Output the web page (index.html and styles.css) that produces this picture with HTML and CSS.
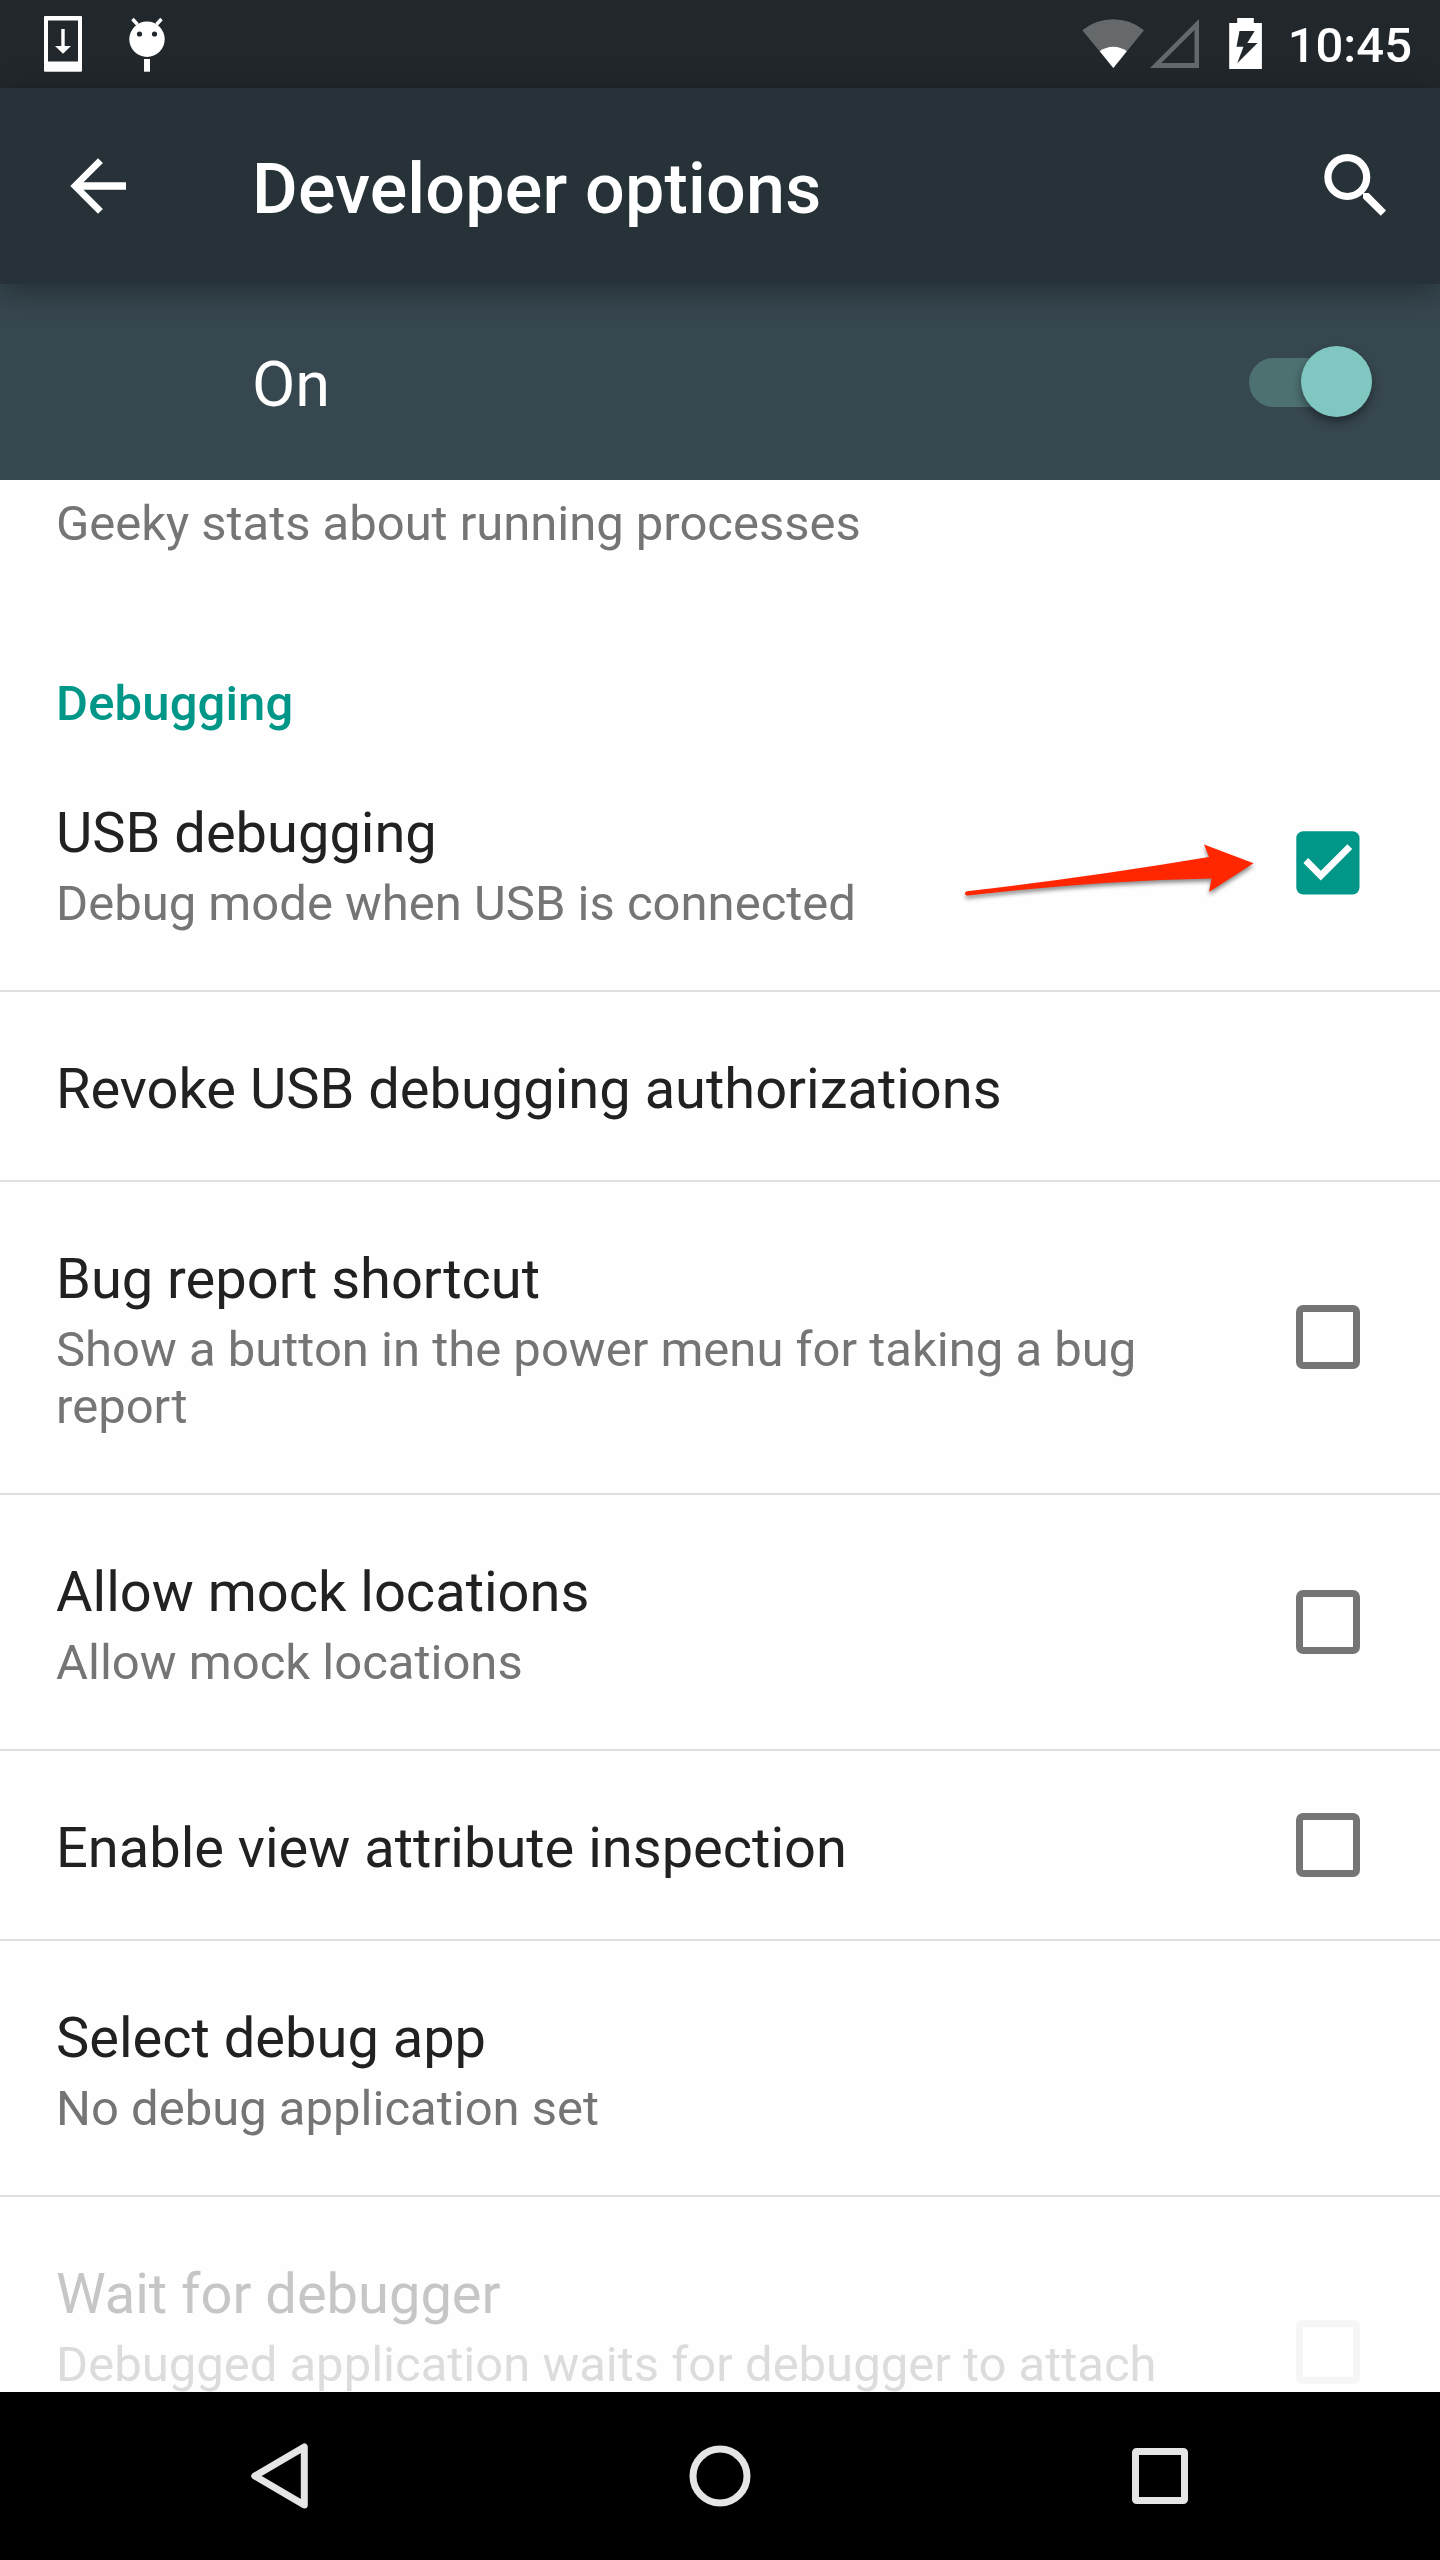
FILE: index.html
```html
<!DOCTYPE html>
<html lang="en">
<head>
<meta charset="utf-8">
<title>Developer options</title>
<link rel="stylesheet" href="styles.css">
</head>
<body>
<div class="screen">
  <div class="status-bar">
    <svg class="status-left" width="200" height="88" viewBox="0 0 200 88" fill="#fff">
      <path fill-rule="evenodd" d="M45 16h36q1 0 1 1v53.700q0 1-1 1H45q-1 0-1-1V17q0-1 1-1zM48 20.500v41h30v-41z"/>
      <path d="M61.300 29h3.400v17h6.300L63 53.700 55 46h6.300z"/>
      <circle cx="147" cy="39.200" r="17.700"/>
      <path d="M132.500 19l5 5.500M161.500 19l-5 5.500" stroke="#fff" stroke-width="3.400"/>
      <path d="M144 59h6v12.700h-6z"/>
      <circle cx="139.500" cy="34" r="2.600" fill="#21272b"/>
      <circle cx="154.500" cy="34" r="2.600" fill="#21272b"/>
    </svg>
    <svg class="status-right" width="200" height="88" viewBox="1070 0 200 88" fill="#fff">
      <path fill="#65696c" d="M1113.300 68L1082.300 30.200A49 49 0 0 1 1144 30.200z"/>
      <path d="M1113.300 68L1099.800 51.300A22 22 0 0 1 1126.800 51.300z"/>
      <path fill="#65696c" fill-rule="evenodd" d="M1150 68h49V19zM1161.300 63h33.200V30z"/>
      <path fill-rule="evenodd" d="M1229.200 23h8v-5h16.600v5h8.100v46h-32.700zM1239.500 31l-3 15.700h7l-6.300 16.600 20.300-20.300h-10.200l7.300-12z"/>
    </svg>
    <span class="clock">10:45</span>
  </div>

  <header class="app-bar">
    <svg class="back" width="60" height="60" viewBox="68 156 60 60">
      <path fill="#fff" d="M70.300 186L98 158.200l4.900 4.900L83.500 182.300H126v7.400H83.500l19.400 19.300-4.900 4.800z"/>
    </svg>
    <h1 class="title">Developer options</h1>
    <svg class="search" width="66" height="66" viewBox="1322 152 66 66">
      <circle cx="1347.300" cy="177.100" r="19.400" fill="none" stroke="#fff" stroke-width="7.200"/>
      <path fill="#fff" d="M1361 190l2.500 3h5.200L1386 210.600l-5.200 5.200L1363 198.300v-4.500l-3-2.500z"/>
    </svg>
  </header>

  <div class="master">
    <span class="master-label">On</span>
    <span class="switch"><span class="thumb"></span></span>
  </div>

  <main class="list">
    <div class="summary partial">Geeky stats about running processes</div>
    <h2 class="section">Debugging</h2>

    <div class="row">
      <div class="text">
        <div class="name">USB debugging</div>
        <div class="summary">Debug mode when USB is connected</div>
      </div>
      <svg class="check" width="64" height="64" viewBox="0 0 64 64">
        <rect x=".3" y=".3" width="63.200" height="63.200" rx="7" fill="#009688"/>
        <path d="M9.800 29.500L24.800 44.600 53.800 15.600" fill="none" stroke="#fff" stroke-width="6.800"/>
      </svg>
      <svg class="pointer" width="310" height="70" viewBox="955 835 310 70">
        <path fill="#ff2600" d="M967 891.300Q1090 877 1209 857L1204 844.500 1253.500 863.200 1209 892 1211.500 878.500Q1090 881 968 895.600Q965 895.500 965 893.500 965 891.500 967 891.300z"/>
      </svg>
    </div>
    <div class="row">
      <div class="text"><div class="name">Revoke USB debugging authorizations</div></div>
    </div>
    <div class="row">
      <div class="text">
        <div class="name">Bug report shortcut</div>
        <div class="summary">Show a button in the power menu for taking a bug report</div>
      </div>
      <span class="box"></span>
    </div>
    <div class="row">
      <div class="text">
        <div class="name">Allow mock locations</div>
        <div class="summary">Allow mock locations</div>
      </div>
      <span class="box"></span>
    </div>
    <div class="row">
      <div class="text"><div class="name">Enable view attribute inspection</div></div>
      <span class="box"></span>
    </div>
    <div class="row">
      <div class="text">
        <div class="name">Select debug app</div>
        <div class="summary">No debug application set</div>
      </div>
    </div>
    <div class="row disabled">
      <div class="text">
        <div class="name">Wait for debugger</div>
        <div class="summary">Debugged application waits for debugger to attach</div>
      </div>
      <span class="box"></span>
    </div>
  </main>

  <nav class="nav-bar">
    <svg width="70" height="70" viewBox="245 2441 70 70"><path d="M254.800 2476L304.300 2447v58z"/></svg>
    <svg width="70" height="70" viewBox="0 0 70 70"><circle cx="35" cy="35" r="27"/></svg>
    <svg width="70" height="70" viewBox="0 0 70 70"><rect x="10.500" y="10.500" width="49" height="49" rx="1"/></svg>
  </nav>
</div>
</body>
</html>
```
FILE: styles.css
```css
* {
  box-sizing: border-box;
}

body {
  margin: 0;
  font-family: Roboto, "Noto Sans", sans-serif;
  background: #fff;
}

.screen {
  display: flex;
  flex-direction: column;
  width: 1440px;
  height: 2560px;
  overflow: hidden;
}

.status-bar {
  display: flex;
  align-items: center;
  flex: none;
  height: 88px;
  padding-right: 28px;
  background: #21272b;
  color: #fff;
}

.status-right {
  margin-left: auto;
}

.clock {
  width: 142px;
  padding-top: 4px;
  font-size: 49px;
  font-weight: 500;
  line-height: 58px;
  text-align: right;
  white-space: nowrap;
}

.app-bar {
  position: relative;
  z-index: 1;
  display: flex;
  align-items: center;
  flex: none;
  height: 196px;
  padding: 0 52px 0 68px;
  background: #263238;
  color: #fff;
  box-shadow: 0 8px 28px rgba(0, 0, 0, 0.35);
}

.title {
  flex: 1;
  margin: 0 0 0 124px;
  padding-top: 6px;
  font-size: 70px;
  font-weight: 500;
  line-height: 82px;
  letter-spacing: 0.2px;
}

.search {
  margin-top: -2px;
}

.master {
  display: flex;
  align-items: center;
  justify-content: space-between;
  flex: none;
  height: 196px;
  padding: 0 68px 0 252px;
  background: #37474f;
  color: #fff;
}

.master-label {
  padding-top: 6px;
  font-size: 63px;
  line-height: 74px;
}

.switch {
  display: flex;
  align-items: center;
  justify-content: flex-end;
  width: 123px;
  height: 49px;
  border-radius: 25px;
  background: #4d7071;
}

.thumb {
  flex: none;
  width: 71px;
  height: 71px;
  margin-top: -1px;
  border-radius: 50%;
  background: #7fc7c0;
  box-shadow: 0 5px 10px rgba(0, 0, 0, 0.4);
}

.list {
  flex: 1;
  min-height: 0;
  overflow: hidden;
  background: #fefefe;
}

.summary {
  color: #757575;
  font-size: 49px;
  line-height: 57px;
}

.partial {
  padding: 15px 56px 0;
  letter-spacing: -0.03px;
}

.section {
  margin: 0;
  padding: 123px 56px 4px;
  color: #009688;
  font-size: 49px;
  font-weight: 500;
  line-height: 57px;
  letter-spacing: 0.15px;
}

.row {
  position: relative;
  display: flex;
  align-items: center;
  gap: 56px;
  padding-right: 80px;
  padding-left: 56px;
  border-bottom: 2px solid #dfdfdf;
}

.text {
  flex: 1;
  padding: 64px 0 58px;
}

.name {
  color: #212121;
  font-size: 56px;
  line-height: 66px;
}

.name + .summary {
  margin-top: 9px;
}

.check,
.box {
  flex: none;
  width: 64px;
  height: 64px;
}

.box {
  margin-bottom: 1px;
  border: 7px solid #757575;
  border-radius: 7px;
}

.pointer {
  position: absolute;
  top: 99px;
  left: 955px;
  filter: drop-shadow(0 3px 2px rgba(0, 0, 0, 0.45));
}

.disabled {
  height: 313px;
}

.disabled .text {
  align-self: flex-start;
}

.disabled .name {
  color: #c6c6c6;
}

.disabled .summary {
  color: #dcdcdc;
}

.disabled .box {
  border-color: #f6f6f6;
}

.nav-bar {
  display: grid;
  grid-template-columns: repeat(3, 440px);
  justify-content: center;
  align-items: center;
  justify-items: center;
  flex: none;
  height: 168px;
  background: #000;
}

.nav-bar svg {
  fill: none;
  stroke: #e5e5e5;
  stroke-width: 7;
  stroke-linejoin: round;
}
```
